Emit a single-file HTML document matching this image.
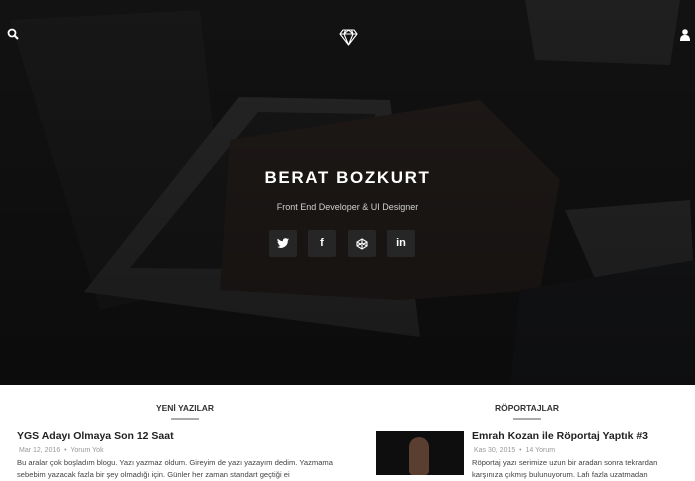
<!DOCTYPE html>
<html><head><meta charset="utf-8"><style>
*{margin:0;padding:0;box-sizing:border-box}
body{width:695px;height:475px;overflow:hidden;background:#fff;font-family:"Liberation Sans",sans-serif;position:relative}
.hero{position:absolute;left:0;top:0;width:695px;height:385px;background:#121212;overflow:hidden}
.hero svg.bg{position:absolute;left:0;top:0}
.name{position:absolute;top:168px;left:0;width:695px;text-align:center;color:#fff;font-weight:bold;font-size:17px;letter-spacing:1.6px}
.sub{position:absolute;top:202px;left:0;width:695px;text-align:center;color:#cfcfcf;font-size:9px}
.soc{position:absolute;top:230px;width:28px;height:27px;background:#262626;border-radius:2px;color:#fff;font-size:11px;font-weight:bold;text-align:center;line-height:27px}
.soc svg{position:absolute;left:8px;top:8px}
.h{position:absolute;top:403px;font-size:8.5px;font-weight:bold;color:#333;text-align:center;width:200px}
.bar{position:absolute;top:418px;width:28px;height:2px;background:#aaa}
.t{position:absolute;font-size:10.5px;font-weight:bold;color:#222}
.m{position:absolute;font-size:7px;color:#999}
.p{position:absolute;font-size:7.6px;color:#444;line-height:12px;white-space:nowrap}
</style></head><body>
<div class="hero">
<svg class="bg" width="695" height="385">
<defs><linearGradient id="g" x1="0" y1="0" x2="0" y2="1"><stop offset="0" stop-color="#000" stop-opacity="0"/><stop offset="1" stop-color="#000" stop-opacity="0.35"/></linearGradient></defs>
<polygon points="10,20 200,10 230,280 100,310" fill="#171717"/>
<polygon points="525,0 680,0 670,65 535,60" fill="#1f1f1f"/>
<polygon points="239,97 390,100 420,337 84,292" fill="#262626"/>
<polygon points="258,112 375,114 380,270 130,268" fill="#161616"/>
<polygon points="230,140 480,100 560,180 540,290 400,300 220,290" fill="#1f1a18"/>
<polygon points="565,210 690,200 695,300 600,290" fill="#262626"/>
<polygon points="520,290 695,260 695,385 510,385" fill="#151618"/>
<rect width="695" height="385" fill="url(#g)"/>
</svg>
<svg style="position:absolute;left:7px;top:28px" width="12" height="12" viewBox="0 0 12 12"><circle cx="5" cy="5" r="3.5" stroke="#fff" stroke-width="1.8" fill="none"/><line x1="7.5" y1="7.5" x2="11" y2="11" stroke="#fff" stroke-width="2"/></svg>
<svg style="position:absolute;left:339px;top:29px" width="19" height="17" viewBox="0 0 19 17"><path d="M4 1H15L18 5L9.5 16L1 5Z M1 5H18 M6.5 1L5 5L9.5 16L14 5L12.5 1 M5 5L9.5 1L14 5" stroke="#fff" stroke-width="1.1" fill="none" stroke-linejoin="round"/></svg>
<svg style="position:absolute;left:680px;top:29px" width="10" height="12" viewBox="0 0 10 12"><circle cx="5" cy="3" r="2.8" fill="#fff"/><path d="M0 12C0 7 2 6 5 6S10 7 10 12Z" fill="#fff"/></svg>
<div class="name">BERAT BOZKURT</div>
<div class="sub">Front End Developer &amp; UI Designer</div>
<div class="soc" style="left:269px"><svg width="12" height="11" viewBox="0 0 12 11"><path d="M12 1.3a5 5 0 0 1-1.4.4A2.5 2.5 0 0 0 11.7.3a5 5 0 0 1-1.6.6A2.5 2.5 0 0 0 5.9 3.2 7 7 0 0 1 .8.6a2.5 2.5 0 0 0 .8 3.3 2.5 2.5 0 0 1-1.1-.3 2.5 2.5 0 0 0 2 2.5 2.5 2.5 0 0 1-1.1 0 2.5 2.5 0 0 0 2.3 1.7A5 5 0 0 1 0 8.8 7 7 0 0 0 10.8 2.6 5 5 0 0 0 12 1.3z" fill="#fff"/></svg></div>
<div class="soc" style="left:308px">f</div>
<div class="soc" style="left:348px"><svg width="12" height="12" viewBox="0 0 12 12"><path d="M6 1L11 4V8L6 11L1 8V4Z M1 4L6 7L11 4 M6 7V11 M1 8L6 5L11 8 M6 1V5" stroke="#fff" stroke-width="1.1" fill="none"/></svg></div>
<div class="soc" style="left:387px">in</div>
</div>
<div class="h" style="left:85px">YENİ YAZILAR</div>
<div class="bar" style="left:171px"></div>
<div class="h" style="left:427px">RÖPORTAJLAR</div>
<div class="bar" style="left:513px"></div>
<div class="t" style="left:17px;top:430px">YGS Adayı Olmaya Son 12 Saat</div>
<div class="m" style="left:19px;top:447px">Mar 12, 2016 &nbsp;•&nbsp; Yorum Yok</div>
<div class="p" style="left:17px;top:457px">Bu aralar çok boşladım blogu. Yazı yazmaz oldum. Gireyim de yazı yazayım dedim. Yazmama<br>sebebim yazacak fazla bir şey olmadığı için. Günler her zaman standart geçtiği ei</div>
<div style="position:absolute;left:376px;top:431px;width:88px;height:44px;background:#0e0e0e"><div style="position:absolute;left:33px;top:6px;width:20px;height:38px;background:#5a3e30;border-radius:10px 10px 4px 4px"></div></div>
<div class="t" style="left:472px;top:430px">Emrah Kozan ile Röportaj Yaptık #3</div>
<div class="m" style="left:474px;top:447px">Kas 30, 2015 &nbsp;•&nbsp; 14 Yorum</div>
<div class="p" style="left:472px;top:457px">Röportaj yazı serimize uzun bir aradan sonra tekrardan<br>karşınıza çıkmış bulunuyorum. Lafı fazla uzatmadan</div>
</body></html>
